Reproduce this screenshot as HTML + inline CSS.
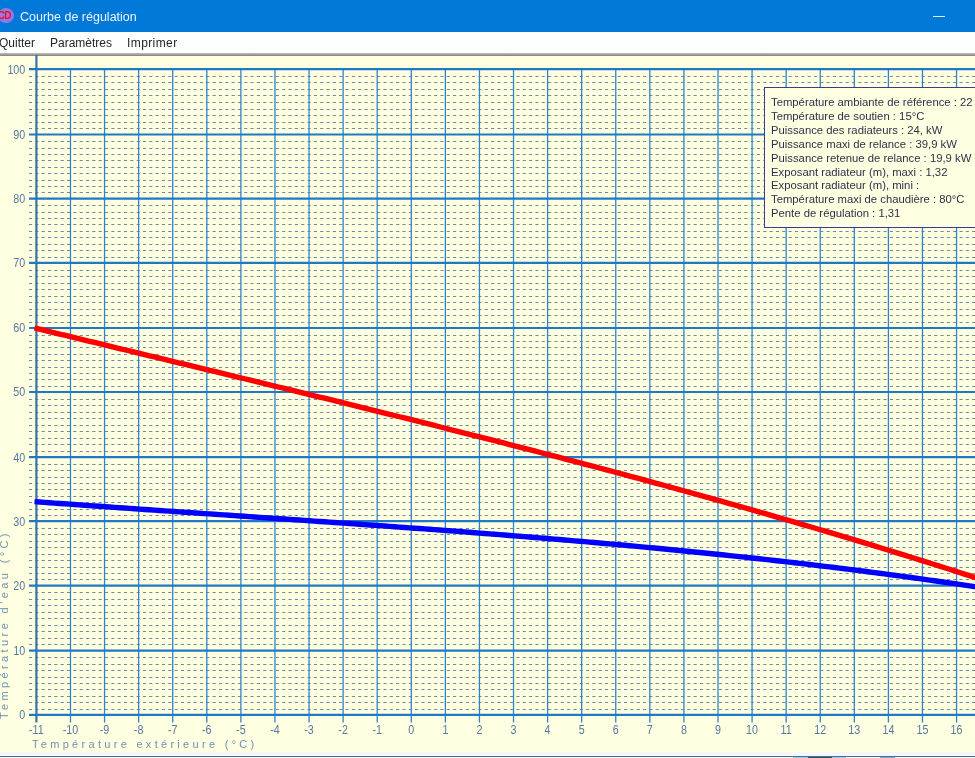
<!DOCTYPE html>
<html><head><meta charset="utf-8"><style>
*{margin:0;padding:0;box-sizing:border-box}
html,body{width:975px;height:758px;overflow:hidden;background:#FFFFE1;font-family:"Liberation Sans",sans-serif}
#title{position:absolute;left:0;top:0;width:975px;height:32px;background:#0078D7}
#title .t{position:absolute;left:20px;top:10px;font-size:12.5px;color:#EAF6FF;white-space:nowrap}
#icon{position:absolute;left:-2px;top:8px;width:16px;height:15px;border-radius:50%;background:#8F7AE8}
#icon span{position:absolute;left:0px;top:2px;font-size:10px;line-height:11px;font-weight:bold;color:#EE1028;letter-spacing:-0.6px}
#min{position:absolute;left:933px;top:16px;width:12px;height:1px;background:#D8F0FF}
#menu{position:absolute;left:0;top:32px;width:975px;height:21px;background:#FDFEFE}
#menu span{position:absolute;top:3.6px;font-size:12px;color:#262626;white-space:nowrap}
#sep{position:absolute;left:0;top:53px;width:975px;height:3px;background:linear-gradient(#C4C0BC,#86807A)}
#chart{position:absolute;left:0;top:0}
.mn{stroke:#6F8A9C;stroke-width:1.2;stroke-dasharray:3.1 3.23}
.vg{stroke:#2C84CE;stroke-width:1.3}
.mj{stroke:#1F78C8;stroke-width:2.2}
.ax{stroke:#3574A6;stroke-width:2.2}
.yl,.xl{font-family:"Liberation Sans",sans-serif;font-size:12.2px;fill:#56799F}
.cr{fill:none;stroke:#FF0000;stroke-width:5.4;stroke-linejoin:round}
.cb{fill:none;stroke:#0000FF;stroke-width:5.4;stroke-linejoin:round}
#info{position:absolute;left:764px;top:87px;width:240px;height:141px;background:#FFFFE1;border:1.3px solid #3A3A9A}
.il{position:absolute;left:6px;margin-top:8px;font-size:11.3px;color:#30304A;white-space:nowrap;line-height:13px}
#xlab{position:absolute;left:32px;top:738px;font-size:11px;letter-spacing:3.3px;color:#6F92B4;white-space:nowrap}
#ylab{position:absolute;left:-2px;top:719px;transform-origin:0 0;transform:rotate(-90deg);font-size:11px;letter-spacing:3.4px;color:#6F92B4;white-space:nowrap}
#bot{position:absolute;left:0;top:752px;width:975px;height:6px;background:#F4F8FA}
#botl{position:absolute;left:0;top:756px;width:975px;height:1px;background:#4A7090}
#chart,#info,#xlab,#ylab,#menu span,#title .t{filter:blur(0.3px)}
</style></head><body>
<div id="title"><div id="icon"><span>CD</span></div><div class="t">Courbe de régulation</div><div id="min"></div></div>
<div id="menu"><span style="left:-1px">Quitter</span><span style="left:50px">Paramètres</span><span style="left:127px;letter-spacing:0.4px">Imprimer</span></div>
<div id="sep"></div>
<svg id="chart" width="975" height="758" viewBox="0 0 975 758">
<line x1="29" y1="709.50" x2="975" y2="709.50" class="mn"/>
<line x1="29" y1="702.50" x2="975" y2="702.50" class="mn"/>
<line x1="29" y1="696.50" x2="975" y2="696.50" class="mn"/>
<line x1="29" y1="689.50" x2="975" y2="689.50" class="mn"/>
<line x1="29" y1="683.50" x2="975" y2="683.50" class="mn"/>
<line x1="29" y1="677.50" x2="975" y2="677.50" class="mn"/>
<line x1="29" y1="670.50" x2="975" y2="670.50" class="mn"/>
<line x1="29" y1="664.50" x2="975" y2="664.50" class="mn"/>
<line x1="29" y1="657.50" x2="975" y2="657.50" class="mn"/>
<line x1="29" y1="644.50" x2="975" y2="644.50" class="mn"/>
<line x1="29" y1="638.50" x2="975" y2="638.50" class="mn"/>
<line x1="29" y1="631.50" x2="975" y2="631.50" class="mn"/>
<line x1="29" y1="625.50" x2="975" y2="625.50" class="mn"/>
<line x1="29" y1="618.50" x2="975" y2="618.50" class="mn"/>
<line x1="29" y1="612.50" x2="975" y2="612.50" class="mn"/>
<line x1="29" y1="605.50" x2="975" y2="605.50" class="mn"/>
<line x1="29" y1="599.50" x2="975" y2="599.50" class="mn"/>
<line x1="29" y1="592.50" x2="975" y2="592.50" class="mn"/>
<line x1="29" y1="579.50" x2="975" y2="579.50" class="mn"/>
<line x1="29" y1="573.50" x2="975" y2="573.50" class="mn"/>
<line x1="29" y1="567.50" x2="975" y2="567.50" class="mn"/>
<line x1="29" y1="560.50" x2="975" y2="560.50" class="mn"/>
<line x1="29" y1="554.50" x2="975" y2="554.50" class="mn"/>
<line x1="29" y1="547.50" x2="975" y2="547.50" class="mn"/>
<line x1="29" y1="541.50" x2="975" y2="541.50" class="mn"/>
<line x1="29" y1="534.50" x2="975" y2="534.50" class="mn"/>
<line x1="29" y1="528.50" x2="975" y2="528.50" class="mn"/>
<line x1="29" y1="515.50" x2="975" y2="515.50" class="mn"/>
<line x1="29" y1="509.50" x2="975" y2="509.50" class="mn"/>
<line x1="29" y1="502.50" x2="975" y2="502.50" class="mn"/>
<line x1="29" y1="496.50" x2="975" y2="496.50" class="mn"/>
<line x1="29" y1="489.50" x2="975" y2="489.50" class="mn"/>
<line x1="29" y1="483.50" x2="975" y2="483.50" class="mn"/>
<line x1="29" y1="477.50" x2="975" y2="477.50" class="mn"/>
<line x1="29" y1="470.50" x2="975" y2="470.50" class="mn"/>
<line x1="29" y1="464.50" x2="975" y2="464.50" class="mn"/>
<line x1="29" y1="451.50" x2="975" y2="451.50" class="mn"/>
<line x1="29" y1="444.50" x2="975" y2="444.50" class="mn"/>
<line x1="29" y1="438.50" x2="975" y2="438.50" class="mn"/>
<line x1="29" y1="431.50" x2="975" y2="431.50" class="mn"/>
<line x1="29" y1="425.50" x2="975" y2="425.50" class="mn"/>
<line x1="29" y1="418.50" x2="975" y2="418.50" class="mn"/>
<line x1="29" y1="412.50" x2="975" y2="412.50" class="mn"/>
<line x1="29" y1="405.50" x2="975" y2="405.50" class="mn"/>
<line x1="29" y1="399.50" x2="975" y2="399.50" class="mn"/>
<line x1="29" y1="386.50" x2="975" y2="386.50" class="mn"/>
<line x1="29" y1="379.50" x2="975" y2="379.50" class="mn"/>
<line x1="29" y1="373.50" x2="975" y2="373.50" class="mn"/>
<line x1="29" y1="367.50" x2="975" y2="367.50" class="mn"/>
<line x1="29" y1="360.50" x2="975" y2="360.50" class="mn"/>
<line x1="29" y1="354.50" x2="975" y2="354.50" class="mn"/>
<line x1="29" y1="347.50" x2="975" y2="347.50" class="mn"/>
<line x1="29" y1="341.50" x2="975" y2="341.50" class="mn"/>
<line x1="29" y1="335.50" x2="975" y2="335.50" class="mn"/>
<line x1="29" y1="322.50" x2="975" y2="322.50" class="mn"/>
<line x1="29" y1="315.50" x2="975" y2="315.50" class="mn"/>
<line x1="29" y1="309.50" x2="975" y2="309.50" class="mn"/>
<line x1="29" y1="302.50" x2="975" y2="302.50" class="mn"/>
<line x1="29" y1="296.50" x2="975" y2="296.50" class="mn"/>
<line x1="29" y1="289.50" x2="975" y2="289.50" class="mn"/>
<line x1="29" y1="283.50" x2="975" y2="283.50" class="mn"/>
<line x1="29" y1="276.50" x2="975" y2="276.50" class="mn"/>
<line x1="29" y1="270.50" x2="975" y2="270.50" class="mn"/>
<line x1="29" y1="257.50" x2="975" y2="257.50" class="mn"/>
<line x1="29" y1="250.50" x2="975" y2="250.50" class="mn"/>
<line x1="29" y1="244.50" x2="975" y2="244.50" class="mn"/>
<line x1="29" y1="237.50" x2="975" y2="237.50" class="mn"/>
<line x1="29" y1="231.50" x2="975" y2="231.50" class="mn"/>
<line x1="29" y1="224.50" x2="975" y2="224.50" class="mn"/>
<line x1="29" y1="218.50" x2="975" y2="218.50" class="mn"/>
<line x1="29" y1="212.50" x2="975" y2="212.50" class="mn"/>
<line x1="29" y1="205.50" x2="975" y2="205.50" class="mn"/>
<line x1="29" y1="192.50" x2="975" y2="192.50" class="mn"/>
<line x1="29" y1="186.50" x2="975" y2="186.50" class="mn"/>
<line x1="29" y1="180.50" x2="975" y2="180.50" class="mn"/>
<line x1="29" y1="173.50" x2="975" y2="173.50" class="mn"/>
<line x1="29" y1="167.50" x2="975" y2="167.50" class="mn"/>
<line x1="29" y1="160.50" x2="975" y2="160.50" class="mn"/>
<line x1="29" y1="154.50" x2="975" y2="154.50" class="mn"/>
<line x1="29" y1="148.50" x2="975" y2="148.50" class="mn"/>
<line x1="29" y1="141.50" x2="975" y2="141.50" class="mn"/>
<line x1="29" y1="128.50" x2="975" y2="128.50" class="mn"/>
<line x1="29" y1="122.50" x2="975" y2="122.50" class="mn"/>
<line x1="29" y1="115.50" x2="975" y2="115.50" class="mn"/>
<line x1="29" y1="109.50" x2="975" y2="109.50" class="mn"/>
<line x1="29" y1="102.50" x2="975" y2="102.50" class="mn"/>
<line x1="29" y1="95.50" x2="975" y2="95.50" class="mn"/>
<line x1="29" y1="89.50" x2="975" y2="89.50" class="mn"/>
<line x1="29" y1="82.50" x2="975" y2="82.50" class="mn"/>
<line x1="29" y1="76.50" x2="975" y2="76.50" class="mn"/>
<line x1="70.48" y1="68.10" x2="70.48" y2="722.5" class="vg"/>
<line x1="104.56" y1="68.10" x2="104.56" y2="722.5" class="vg"/>
<line x1="138.64" y1="68.10" x2="138.64" y2="722.5" class="vg"/>
<line x1="172.72" y1="68.10" x2="172.72" y2="722.5" class="vg"/>
<line x1="206.80" y1="68.10" x2="206.80" y2="722.5" class="vg"/>
<line x1="240.88" y1="68.10" x2="240.88" y2="722.5" class="vg"/>
<line x1="274.96" y1="68.10" x2="274.96" y2="722.5" class="vg"/>
<line x1="309.04" y1="68.10" x2="309.04" y2="722.5" class="vg"/>
<line x1="343.12" y1="68.10" x2="343.12" y2="722.5" class="vg"/>
<line x1="377.20" y1="68.10" x2="377.20" y2="722.5" class="vg"/>
<line x1="411.28" y1="68.10" x2="411.28" y2="722.5" class="vg"/>
<line x1="445.36" y1="68.10" x2="445.36" y2="722.5" class="vg"/>
<line x1="479.44" y1="68.10" x2="479.44" y2="722.5" class="vg"/>
<line x1="513.52" y1="68.10" x2="513.52" y2="722.5" class="vg"/>
<line x1="547.60" y1="68.10" x2="547.60" y2="722.5" class="vg"/>
<line x1="581.68" y1="68.10" x2="581.68" y2="722.5" class="vg"/>
<line x1="615.76" y1="68.10" x2="615.76" y2="722.5" class="vg"/>
<line x1="649.84" y1="68.10" x2="649.84" y2="722.5" class="vg"/>
<line x1="683.92" y1="68.10" x2="683.92" y2="722.5" class="vg"/>
<line x1="718.00" y1="68.10" x2="718.00" y2="722.5" class="vg"/>
<line x1="752.08" y1="68.10" x2="752.08" y2="722.5" class="vg"/>
<line x1="786.16" y1="68.10" x2="786.16" y2="722.5" class="vg"/>
<line x1="820.24" y1="68.10" x2="820.24" y2="722.5" class="vg"/>
<line x1="854.32" y1="68.10" x2="854.32" y2="722.5" class="vg"/>
<line x1="888.40" y1="68.10" x2="888.40" y2="722.5" class="vg"/>
<line x1="922.48" y1="68.10" x2="922.48" y2="722.5" class="vg"/>
<line x1="956.56" y1="68.10" x2="956.56" y2="722.5" class="vg"/>
<line x1="29" y1="714.80" x2="975" y2="714.80" class="mj"/>
<line x1="29" y1="650.70" x2="975" y2="650.70" class="mj"/>
<line x1="29" y1="585.70" x2="975" y2="585.70" class="mj"/>
<line x1="29" y1="521.10" x2="975" y2="521.10" class="mj"/>
<line x1="29" y1="457.20" x2="975" y2="457.20" class="mj"/>
<line x1="29" y1="392.00" x2="975" y2="392.00" class="mj"/>
<line x1="29" y1="328.00" x2="975" y2="328.00" class="mj"/>
<line x1="29" y1="262.80" x2="975" y2="262.80" class="mj"/>
<line x1="29" y1="198.60" x2="975" y2="198.60" class="mj"/>
<line x1="29" y1="134.50" x2="975" y2="134.50" class="mj"/>
<line x1="29" y1="69.10" x2="975" y2="69.10" class="mj"/>
<line x1="36.40" y1="55" x2="36.40" y2="722.5" class="ax"/>
<text transform="translate(25.3,719.20) scale(0.88,1)" class="yl" text-anchor="end">0</text>
<text transform="translate(25.3,655.10) scale(0.88,1)" class="yl" text-anchor="end">10</text>
<text transform="translate(25.3,590.10) scale(0.88,1)" class="yl" text-anchor="end">20</text>
<text transform="translate(25.3,525.50) scale(0.88,1)" class="yl" text-anchor="end">30</text>
<text transform="translate(25.3,461.60) scale(0.88,1)" class="yl" text-anchor="end">40</text>
<text transform="translate(25.3,396.40) scale(0.88,1)" class="yl" text-anchor="end">50</text>
<text transform="translate(25.3,332.40) scale(0.88,1)" class="yl" text-anchor="end">60</text>
<text transform="translate(25.3,267.20) scale(0.88,1)" class="yl" text-anchor="end">70</text>
<text transform="translate(25.3,203.00) scale(0.88,1)" class="yl" text-anchor="end">80</text>
<text transform="translate(25.3,138.90) scale(0.88,1)" class="yl" text-anchor="end">90</text>
<text transform="translate(25.3,73.50) scale(0.88,1)" class="yl" text-anchor="end">100</text>
<text transform="translate(36.40,733.8) scale(0.88,1)" class="xl" text-anchor="middle">-11</text>
<text transform="translate(70.48,733.8) scale(0.88,1)" class="xl" text-anchor="middle">-10</text>
<text transform="translate(104.56,733.8) scale(0.88,1)" class="xl" text-anchor="middle">-9</text>
<text transform="translate(138.64,733.8) scale(0.88,1)" class="xl" text-anchor="middle">-8</text>
<text transform="translate(172.72,733.8) scale(0.88,1)" class="xl" text-anchor="middle">-7</text>
<text transform="translate(206.80,733.8) scale(0.88,1)" class="xl" text-anchor="middle">-6</text>
<text transform="translate(240.88,733.8) scale(0.88,1)" class="xl" text-anchor="middle">-5</text>
<text transform="translate(274.96,733.8) scale(0.88,1)" class="xl" text-anchor="middle">-4</text>
<text transform="translate(309.04,733.8) scale(0.88,1)" class="xl" text-anchor="middle">-3</text>
<text transform="translate(343.12,733.8) scale(0.88,1)" class="xl" text-anchor="middle">-2</text>
<text transform="translate(377.20,733.8) scale(0.88,1)" class="xl" text-anchor="middle">-1</text>
<text transform="translate(411.28,733.8) scale(0.88,1)" class="xl" text-anchor="middle">0</text>
<text transform="translate(445.36,733.8) scale(0.88,1)" class="xl" text-anchor="middle">1</text>
<text transform="translate(479.44,733.8) scale(0.88,1)" class="xl" text-anchor="middle">2</text>
<text transform="translate(513.52,733.8) scale(0.88,1)" class="xl" text-anchor="middle">3</text>
<text transform="translate(547.60,733.8) scale(0.88,1)" class="xl" text-anchor="middle">4</text>
<text transform="translate(581.68,733.8) scale(0.88,1)" class="xl" text-anchor="middle">5</text>
<text transform="translate(615.76,733.8) scale(0.88,1)" class="xl" text-anchor="middle">6</text>
<text transform="translate(649.84,733.8) scale(0.88,1)" class="xl" text-anchor="middle">7</text>
<text transform="translate(683.92,733.8) scale(0.88,1)" class="xl" text-anchor="middle">8</text>
<text transform="translate(718.00,733.8) scale(0.88,1)" class="xl" text-anchor="middle">9</text>
<text transform="translate(752.08,733.8) scale(0.88,1)" class="xl" text-anchor="middle">10</text>
<text transform="translate(786.16,733.8) scale(0.88,1)" class="xl" text-anchor="middle">11</text>
<text transform="translate(820.24,733.8) scale(0.88,1)" class="xl" text-anchor="middle">12</text>
<text transform="translate(854.32,733.8) scale(0.88,1)" class="xl" text-anchor="middle">13</text>
<text transform="translate(888.40,733.8) scale(0.88,1)" class="xl" text-anchor="middle">14</text>
<text transform="translate(922.48,733.8) scale(0.88,1)" class="xl" text-anchor="middle">15</text>
<text transform="translate(956.56,733.8) scale(0.88,1)" class="xl" text-anchor="middle">16</text>
<polyline points="34.5,327.94 39.5,329.16 44.5,330.37 49.5,331.59 54.5,332.80 59.5,334.02 64.5,335.23 69.5,336.44 74.5,337.65 79.5,338.86 84.5,340.07 89.5,341.28 94.5,342.49 99.5,343.70 104.5,344.91 109.5,346.12 114.5,347.33 119.5,348.54 124.5,349.75 129.5,350.95 134.5,352.16 139.5,353.37 144.5,354.58 149.5,355.78 154.5,356.99 159.5,358.20 164.5,359.41 169.5,360.61 174.5,361.82 179.5,363.03 184.5,364.24 189.5,365.44 194.5,366.65 199.5,367.86 204.5,369.07 209.5,370.28 214.5,371.49 219.5,372.70 224.5,373.91 229.5,375.12 234.5,376.33 239.5,377.54 244.5,378.75 249.5,379.97 254.5,381.18 259.5,382.39 264.5,383.61 269.5,384.82 274.5,386.04 279.5,387.25 284.5,388.47 289.5,389.69 294.5,390.91 299.5,392.13 304.5,393.35 309.5,394.57 314.5,395.79 319.5,397.02 324.5,398.24 329.5,399.47 334.5,400.69 339.5,401.92 344.5,403.15 349.5,404.38 354.5,405.61 359.5,406.84 364.5,408.07 369.5,409.31 374.5,410.54 379.5,411.78 384.5,413.02 389.5,414.26 394.5,415.50 399.5,416.75 404.5,417.99 409.5,419.24 414.5,420.48 419.5,421.73 424.5,422.98 429.5,424.24 434.5,425.49 439.5,426.75 444.5,428.00 449.5,429.26 454.5,430.52 459.5,431.79 464.5,433.05 469.5,434.32 474.5,435.59 479.5,436.86 484.5,438.13 489.5,439.40 494.5,440.68 499.5,441.96 504.5,443.24 509.5,444.52 514.5,445.81 519.5,447.09 524.5,448.38 529.5,449.67 534.5,450.97 539.5,452.26 544.5,453.56 549.5,454.86 554.5,456.17 559.5,457.47 564.5,458.78 569.5,460.09 574.5,461.40 579.5,462.72 584.5,464.04 589.5,465.36 594.5,466.68 599.5,468.01 604.5,469.34 609.5,470.67 614.5,472.00 619.5,473.34 624.5,474.68 629.5,476.02 634.5,477.37 639.5,478.72 644.5,480.07 649.5,481.42 654.5,482.78 659.5,484.14 664.5,485.51 669.5,486.87 674.5,488.24 679.5,489.62 684.5,490.99 689.5,492.37 694.5,493.75 699.5,495.14 704.5,496.53 709.5,497.92 714.5,499.32 719.5,500.72 724.5,502.12 729.5,503.53 734.5,504.94 739.5,506.35 744.5,507.77 749.5,509.19 754.5,510.61 759.5,512.04 764.5,513.47 769.5,514.91 774.5,516.34 779.5,517.79 784.5,519.23 789.5,520.68 794.5,522.14 799.5,523.60 804.5,525.06 809.5,526.52 814.5,527.99 819.5,529.47 824.5,530.94 829.5,532.43 834.5,533.91 839.5,535.40 844.5,536.90 849.5,538.40 854.5,539.90 859.5,541.40 864.5,542.92 869.5,544.43 874.5,545.95 879.5,547.48 884.5,549.00 889.5,550.54 894.5,552.08 899.5,553.62 904.5,555.16 909.5,556.71 914.5,558.27 919.5,559.83 924.5,561.40 929.5,562.97 934.5,564.54 939.5,566.12 944.5,567.70 949.5,569.29 954.5,570.89 959.5,572.48 964.5,574.09 969.5,575.69 974.5,577.31 979.5,578.93" class="cr"/>
<polyline points="34.5,501.61 39.5,501.98 44.5,502.35 49.5,502.71 54.5,503.08 59.5,503.44 64.5,503.80 69.5,504.16 74.5,504.52 79.5,504.88 84.5,505.24 89.5,505.60 94.5,505.95 99.5,506.30 104.5,506.66 109.5,507.01 114.5,507.36 119.5,507.71 124.5,508.06 129.5,508.41 134.5,508.76 139.5,509.10 144.5,509.45 149.5,509.80 154.5,510.14 159.5,510.49 164.5,510.83 169.5,511.17 174.5,511.52 179.5,511.86 184.5,512.20 189.5,512.54 194.5,512.89 199.5,513.23 204.5,513.57 209.5,513.91 214.5,514.25 219.5,514.59 224.5,514.93 229.5,515.27 234.5,515.61 239.5,515.95 244.5,516.30 249.5,516.64 254.5,516.98 259.5,517.32 264.5,517.66 269.5,518.00 274.5,518.34 279.5,518.69 284.5,519.03 289.5,519.37 294.5,519.72 299.5,520.06 304.5,520.40 309.5,520.75 314.5,521.09 319.5,521.44 324.5,521.79 329.5,522.14 334.5,522.48 339.5,522.83 344.5,523.18 349.5,523.53 354.5,523.89 359.5,524.24 364.5,524.59 369.5,524.95 374.5,525.30 379.5,525.66 384.5,526.02 389.5,526.38 394.5,526.74 399.5,527.10 404.5,527.46 409.5,527.83 414.5,528.19 419.5,528.56 424.5,528.93 429.5,529.30 434.5,529.67 439.5,530.04 444.5,530.41 449.5,530.79 454.5,531.17 459.5,531.55 464.5,531.93 469.5,532.31 474.5,532.70 479.5,533.08 484.5,533.47 489.5,533.86 494.5,534.25 499.5,534.65 504.5,535.04 509.5,535.44 514.5,535.84 519.5,536.24 524.5,536.65 529.5,537.05 534.5,537.46 539.5,537.87 544.5,538.29 549.5,538.70 554.5,539.12 559.5,539.54 564.5,539.97 569.5,540.39 574.5,540.82 579.5,541.25 584.5,541.68 589.5,542.12 594.5,542.56 599.5,543.00 604.5,543.45 609.5,543.89 614.5,544.34 619.5,544.80 624.5,545.25 629.5,545.71 634.5,546.17 639.5,546.64 644.5,547.10 649.5,547.58 654.5,548.05 659.5,548.53 664.5,549.01 669.5,549.49 674.5,549.98 679.5,550.47 684.5,550.96 689.5,551.46 694.5,551.96 699.5,552.47 704.5,552.97 709.5,553.48 714.5,554.00 719.5,554.52 724.5,555.04 729.5,555.57 734.5,556.09 739.5,556.63 744.5,557.17 749.5,557.71 754.5,558.25 759.5,558.80 764.5,559.35 769.5,559.91 774.5,560.47 779.5,561.04 784.5,561.61 789.5,562.18 794.5,562.76 799.5,563.34 804.5,563.92 809.5,564.51 814.5,565.11 819.5,565.71 824.5,566.31 829.5,566.92 834.5,567.53 839.5,568.15 844.5,568.77 849.5,569.40 854.5,570.03 859.5,570.66 864.5,571.30 869.5,571.95 874.5,572.60 879.5,573.25 884.5,573.91 889.5,574.58 894.5,575.24 899.5,575.92 904.5,576.60 909.5,577.28 914.5,577.97 919.5,578.67 924.5,579.37 929.5,580.07 934.5,580.78 939.5,581.50 944.5,582.22 949.5,582.94 954.5,583.68 959.5,584.41 964.5,585.16 969.5,585.90 974.5,586.66 979.5,587.42" class="cb"/>
</svg>
<div id="info"><div class="il" style="top:0.0px">Température ambiante de référence : 22</div><div class="il" style="top:13.9px">Température de soutien : 15°C</div><div class="il" style="top:27.8px">Puissance des radiateurs : 24, kW</div><div class="il" style="top:41.7px">Puissance maxi de relance : 39,9 kW</div><div class="il" style="top:55.6px">Puissance retenue de relance : 19,9 kW</div><div class="il" style="top:69.5px">Exposant radiateur (m), maxi : 1,32</div><div class="il" style="top:83.4px">Exposant radiateur (m), mini :</div><div class="il" style="top:97.3px">Température maxi de chaudière : 80°C</div><div class="il" style="top:111.2px">Pente de régulation : 1,31</div></div>
<div id="xlab">Température extérieure (°C)</div>
<div id="ylab">Température d'eau (°C)</div>
<div id="bot"></div><div id="botl"></div><div style="position:absolute;left:793px;top:757px;width:53px;height:1px;background:#9CC8EC"></div><div style="position:absolute;left:808px;top:757px;width:24px;height:1px;background:#3A4A60"></div><div style="position:absolute;left:880px;top:757px;width:15px;height:1px;background:#8AA8C0"></div>
</body></html>
